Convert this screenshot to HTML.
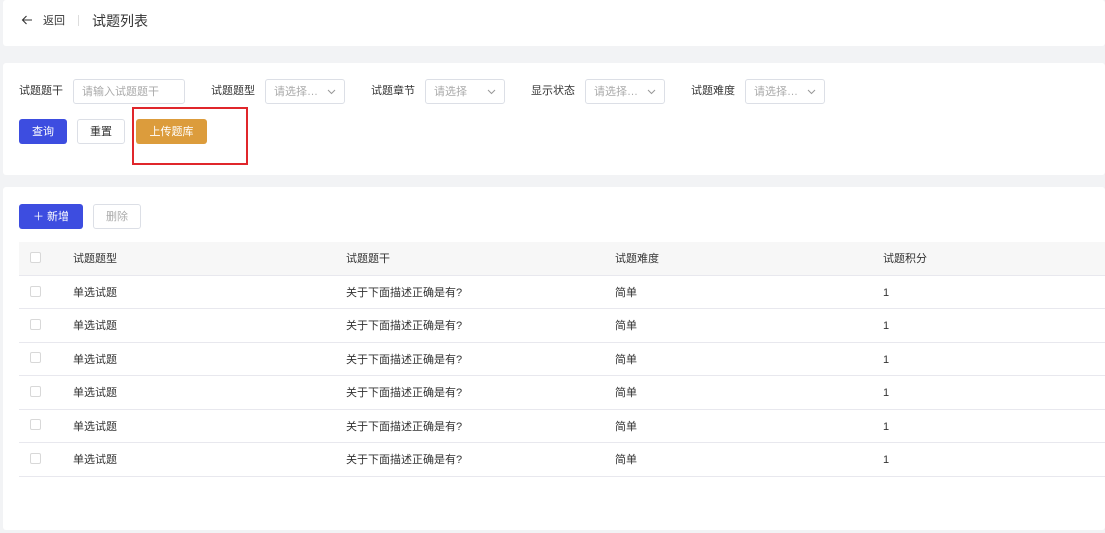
<!DOCTYPE html><html><head><meta charset="utf-8"><style>
*{box-sizing:border-box;margin:0;padding:0}
body{width:1105px;height:533px;background:#f2f3f5;font-family:"Liberation Sans","Noto Sans CJK SC",sans-serif;font-size:11px;line-height:13px;color:#333;position:relative;overflow:hidden}
.card{position:absolute;left:3px;right:0;background:#fff;border-radius:3px}
.a{position:absolute;white-space:nowrap}
.inp{position:absolute;height:25px;border:1px solid #dcdfe6;border-radius:3px;color:#aaa;padding:0 8px;line-height:24px}
.inp svg{position:absolute;right:8px;top:9px}
.btn{position:absolute;height:25px;border-radius:3px;line-height:26px;text-align:center;font-size:11px}
.cb{position:absolute;left:30px;width:11px;height:11px;border:1px solid #d8d8d8;border-radius:2px;background:#fff}
.row{position:absolute;left:19px;right:0;height:34px;border-bottom:1px solid #e8e8ee}
.row span{position:absolute;top:11px}
</style></head><body>
<div class="card" style="top:0;height:46px">
<svg class="a" style="left:18px;top:15px" width="12" height="10"><path d="M11 5H1.5M5.5 1L1.5 5l4 4" fill="none" stroke="#333" stroke-width="1.1"/></svg>
<div class="a" style="left:40px;top:15px">返回</div>
<div class="a" style="left:75px;top:15px;width:1px;height:11px;background:#ddd"></div>
<div class="a" style="left:89px;top:12px;font-size:14px;line-height:18px">试题列表</div>
</div>
<div class="card" style="top:63px;height:112px"></div>
<div class="a" style="left:19px;top:85px">试题题干</div>
<div class="inp" style="left:73px;top:79px;width:112px">请输入试题题干</div>
<div class="a" style="left:211px;top:85px">试题题型</div>
<div class="inp" style="left:265px;top:79px;width:80px">请选择…<svg width="9" height="6"><path d="M1 1l3.5 3.5L8 1" fill="none" stroke="#999"/></svg></div>
<div class="a" style="left:371px;top:85px">试题章节</div>
<div class="inp" style="left:425px;top:79px;width:80px">请选择<svg width="9" height="6"><path d="M1 1l3.5 3.5L8 1" fill="none" stroke="#999"/></svg></div>
<div class="a" style="left:531px;top:85px">显示状态</div>
<div class="inp" style="left:585px;top:79px;width:80px">请选择…<svg width="9" height="6"><path d="M1 1l3.5 3.5L8 1" fill="none" stroke="#999"/></svg></div>
<div class="a" style="left:691px;top:85px">试题难度</div>
<div class="inp" style="left:745px;top:79px;width:80px">请选择…<svg width="9" height="6"><path d="M1 1l3.5 3.5L8 1" fill="none" stroke="#999"/></svg></div>
<div class="btn" style="left:19px;top:119px;width:48px;background:#3d4de0;color:#fff">查询</div>
<div class="btn" style="left:77px;top:119px;width:48px;border:1px solid #dcdfe6;line-height:24px">重置</div>
<div class="btn" style="left:136px;top:119px;width:71px;background:#dc9c3c;color:#fff">上传题库</div>
<div class="a" style="left:132px;top:107px;width:116px;height:58px;border:2px solid #e0262b"></div>
<div class="card" style="top:187px;height:343px"></div>
<div class="btn" style="left:19px;top:204px;width:64px;background:#3d4de0;color:#fff">＋ 新增</div>
<div class="btn" style="left:93px;top:204px;width:48px;border:1px solid #dcdfe6;color:#aaa;line-height:24px">删除</div>
<div class="row" style="top:242px;height:34px;background:#f7f7f7"><span style="left:54px">试题题型</span><span style="left:327px">试题题干</span><span style="left:596px">试题难度</span><span style="left:864px">试题积分</span></div>
<div class="cb" style="top:252px"></div>
<div class="row" style="top:276px;height:33px"><span style="left:54px">单选试题</span><span style="left:327px">关于下面描述正确是有?</span><span style="left:596px">简单</span><span style="left:864px">1</span></div><div class="cb" style="top:286px"></div>
<div class="row" style="top:309px;height:34px"><span style="left:54px">单选试题</span><span style="left:327px">关于下面描述正确是有?</span><span style="left:596px">简单</span><span style="left:864px">1</span></div><div class="cb" style="top:319px"></div>
<div class="row" style="top:343px;height:33px"><span style="left:54px">单选试题</span><span style="left:327px">关于下面描述正确是有?</span><span style="left:596px">简单</span><span style="left:864px">1</span></div><div class="cb" style="top:352px"></div>
<div class="row" style="top:376px;height:34px"><span style="left:54px">单选试题</span><span style="left:327px">关于下面描述正确是有?</span><span style="left:596px">简单</span><span style="left:864px">1</span></div><div class="cb" style="top:386px"></div>
<div class="row" style="top:410px;height:33px"><span style="left:54px">单选试题</span><span style="left:327px">关于下面描述正确是有?</span><span style="left:596px">简单</span><span style="left:864px">1</span></div><div class="cb" style="top:419px"></div>
<div class="row" style="top:443px;height:34px"><span style="left:54px">单选试题</span><span style="left:327px">关于下面描述正确是有?</span><span style="left:596px">简单</span><span style="left:864px">1</span></div><div class="cb" style="top:453px"></div>
</body></html>
